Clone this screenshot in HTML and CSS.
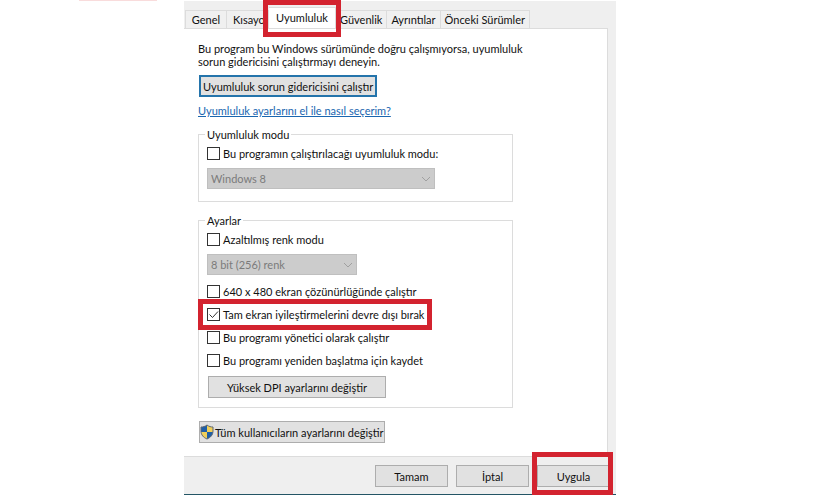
FILE: index.html
```
<!DOCTYPE html>
<html lang="tr">
<head>
    <meta charset="UTF-8">
    <meta name="viewport" content="width=device-width, initial-scale=1.0">
    <title>Uyumluluk</title>
    <link rel="stylesheet" href="styles.css">
</head>
<body>
    <div class="top-strip"></div>

    <main class="dialog">
        <nav class="tabs">
            <button type="button" class="tab tab-first">Genel</button>
            <button type="button" class="tab tab-cut">Kısayol</button>
            <div class="tab-active-wrap marked">
                <button type="button" class="tab tab-active">Uyumluluk</button>
            </div>
            <button type="button" class="tab">Güvenlik</button>
            <button type="button" class="tab">Ayrıntılar</button>
            <button type="button" class="tab">Önceki Sürümler</button>
        </nav>

        <section class="panel">
            <p class="intro">Bu program bu Windows sürümünde doğru çalışmıyorsa, uyumluluk sorun gidericisini çalıştırmayı deneyin.</p>
            <button type="button" class="btn btn-wide btn-default">Uyumluluk sorun gidericisini çalıştır</button>
            <a class="help" href="#">Uyumluluk ayarlarını el ile nasıl seçerim?</a>

            <fieldset class="group group-mode">
                <legend>Uyumluluk modu</legend>
                <label class="check"><input type="checkbox"><span>Bu programın çalıştırılacağı uyumluluk modu:</span></label>
                <div class="select select-long">
                    <select aria-label="Uyumluluk modu" disabled><option>Windows 8</option></select>
                    <svg class="arrow" viewBox="0 0 10 6"><path d="M1 1l4 4 4-4"/></svg>
                </div>
            </fieldset>

            <fieldset class="group group-settings">
                <legend>Ayarlar</legend>
                <label class="check"><input type="checkbox"><span>Azaltılmış renk modu</span></label>
                <div class="select select-short">
                    <select aria-label="Renk modu" disabled><option>8 bit (256) renk</option></select>
                    <svg class="arrow" viewBox="0 0 10 6"><path d="M1 1l4 4 4-4"/></svg>
                </div>
                <div class="check-list">
                    <label class="check"><input type="checkbox"><span>640 x 480 ekran çözünürlüğünde çalıştır</span></label>
                    <label class="check marked mark-row"><input type="checkbox" checked><span>Tam ekran iyileştirmelerini devre dışı bırak</span><svg class="tick" viewBox="0 0 13 13"><path d="M2.500 6.500l3 3 5.500-6"/></svg></label>
                    <label class="check"><input type="checkbox"><span>Bu programı yönetici olarak çalıştır</span></label>
                    <label class="check"><input type="checkbox"><span>Bu programı yeniden başlatma için kaydet</span></label>
                </div>
                <button type="button" class="btn btn-wide">Yüksek DPI ayarlarını değiştir</button>
            </fieldset>

            <button type="button" class="btn btn-wide btn-shield">
                <svg class="shield" viewBox="0 0 14 16">
                    <path fill="#1f5fa8" d="M7 1C5 2.600 3 3 1 3v5h6z"/>
                    <path fill="#f0cf5a" d="M7 1c2 1.600 4 2 6 2v5H7z"/>
                    <path fill="#f0cf5a" d="M1 8h6v7C3.500 13.500 1.300 11.300 1 8z"/>
                    <path fill="#1f5fa8" d="M13 8H7v7c3.500-1.500 5.700-3.700 6-7z"/>
                    <path fill="none" stroke="#5f6872" d="M7 1C5 2.600 3 3 1 3v4c0 4 2.500 6.500 6 8 3.500-1.500 6-4 6-8V3c-2 0-4-.4-6-2z"/>
                </svg>
                <span>Tüm kullanıcıların ayarlarını değiştir</span>
            </button>
        </section>

        <footer class="actions">
            <button type="button" class="btn">Tamam</button>
            <button type="button" class="btn">İptal</button>
            <div class="marked mark-apply"><button type="button" class="btn">Uygula</button></div>
        </footer>
    </main>
</body>
</html>
```
FILE: styles.css
```
* {
    box-sizing: border-box;
}

body {
    margin: 0;
    background: #fff;
    color: #111;
    font-family: Lato, "Liberation Sans", sans-serif;
    font-size: 11px;
    line-height: 13px;
}

button,
select {
    font: inherit;
    color: inherit;
}

.top-strip {
    width: 78px;
    height: 1px;
    margin-left: 79px;
    background: #f9dcdc;
}

.dialog {
    max-width: 432px;
    margin-left: 184px;
    background: #efefef;
    border-bottom: 1px solid #235565;
}

/* red frame around the places to click */
.marked {
    position: relative;
}

.marked::after {
    content: "";
    position: absolute;
    z-index: 2;
    border: 5px solid #d3232f;
    pointer-events: none;
}

/* tabs */
.tabs {
    display: flex;
    align-items: flex-end;
    height: 27px;
    padding-left: 1px;
}

.tab {
    height: 18px;
    padding: 0 4px;
    border: 1px solid #dcdcdc;
    border-left: 0;
    border-bottom: 0;
    background: #f0f0f0;
    white-space: nowrap;
}

.tab-first {
    width: 42px;
    border-left: 1px solid #dcdcdc;
}

.tab-cut {
    width: 42px;
    padding: 0 0 0 6px;
    text-align: left;
}

.tab-active-wrap {
    z-index: 1;
}

.tab-active-wrap::after {
    inset: -7px -5px -9px -6px;
}

.tab-active {
    display: block;
    width: 67px;
    height: 21px;
    padding-bottom: 2px;
    background: #fff;
}

/* page of the active tab */
.panel {
    display: flex;
    flex-direction: column;
    align-items: flex-start;
    margin-right: 8px;
    padding: 13px 14px;
    border: 1px solid #dcdcdc;
    border-left: 0;
    background: #fff;
}

.intro {
    max-width: 336px;
    margin: 0 0 7px;
}

.btn {
    height: 22px;
    padding: 0 2px;
    border: 1px solid #adadad;
    background: #e1e1e1;
    text-align: center;
    white-space: nowrap;
}

.btn-wide {
    min-width: 178px;
    margin-left: 1px;
}

.btn-default {
    border: 2px solid #2474ab;
}

.help {
    margin: 7px 0 11px;
    color: #1a66b0;
}

.group {
    width: 100%;
    max-width: 315px;
    min-width: 0;
    margin: 0;
    padding: 5px 8px 0;
    border: 1px solid #dcdcdc;
}

.group legend {
    margin-left: -2px;
    padding: 0 2px;
}

.group-mode {
    margin-bottom: 12px;
    padding-bottom: 12px;
}

.group-settings {
    margin-bottom: 13px;
    padding-bottom: 9px;
}

.check {
    display: flex;
    align-items: center;
    gap: 3px;
    width: fit-content;
    height: 15px;
    white-space: nowrap;
}

.check input {
    appearance: none;
    width: 13px;
    height: 13px;
    margin: 0;
    border: 1px solid #333;
    background: #fff;
}

.check-list {
    display: flex;
    flex-direction: column;
    gap: 8px;
    margin: 9px 0 8px;
}

.mark-row::after {
    inset: -8px -8px -8px -9px;
}

.tick {
    position: absolute;
    top: 1px;
    left: 0;
    width: 13px;
    height: 13px;
    fill: none;
    stroke: #333;
    visibility: hidden;
}

.check input:checked ~ .tick {
    visibility: visible;
}

.select {
    position: relative;
    max-width: 100%;
    margin-top: 7px;
}

.select select {
    display: block;
    width: 100%;
    height: 21px;
    padding: 0 3px;
    appearance: none;
    border: 1px solid #bfbfbf;
    border-radius: 0;
    background: #ccc;
    color: #7b7b7b;
    opacity: 1;
}

.select-long {
    width: 228px;
}

.select-short {
    width: 150px;
}

.arrow {
    position: absolute;
    top: 8px;
    right: 4px;
    width: 10px;
    height: 6px;
    fill: none;
    stroke: #a0a0a0;
}

.btn-shield {
    display: flex;
    align-items: center;
    gap: 1px;
    padding: 0;
}

.shield {
    flex: none;
    width: 14px;
    height: 16px;
}

/* bottom buttons */
.actions {
    display: flex;
    justify-content: flex-end;
    gap: 8px;
    padding: 8px 6px 7px;
}

.actions .btn {
    width: 73px;
}

.mark-apply::after {
    inset: -13px -3px -8px -5px;
}
```
